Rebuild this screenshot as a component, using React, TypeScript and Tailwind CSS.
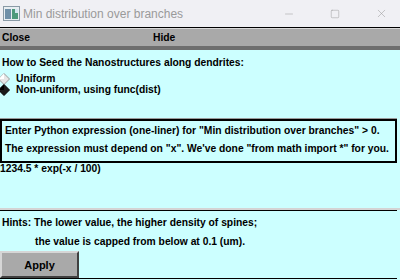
import { Minus, Square, X } from "lucide-react";

const tk = { fontFamily: '"Liberation Sans", Arial, sans-serif' };

function AppIcon() {
  return (
    <svg width="17" height="15" viewBox="0 0 17 15">
      <rect x="0.5" y="0.5" width="16" height="14" fill="#e8eef2" stroke="#8a9aa6" />
      <rect x="2" y="3" width="6" height="10" fill="#6f8fa8" />
      <rect x="9" y="3" width="6" height="10" fill="#4e9a7c" />
      <rect x="12" y="3" width="3" height="4" fill="#d4e6f0" />
    </svg>
  );
}

function Radio({ on, label }: { on?: boolean; label: string }) {
  return (
    <div className="flex items-center h-[11px]">
      <svg width="12" height="12" viewBox="0 0 12 12" className="-ml-[4px] shrink-0">
        <polygon points="6,0.5 11.5,6 6,11.5 0.5,6" fill={on ? "#1a1a1a" : "#e6e6e6"} stroke={on ? "#000" : "#9a9a9a"} />
        <polygon points="6,0.5 0.5,6 6,6" fill={on ? "#000" : "#fff"} />
      </svg>
      <span className="ml-[6px]">{label}</span>
    </div>
  );
}

export default function App() {
  return (
    <div className="w-[400px] h-[280px] overflow-hidden bg-[#ccffff] flex flex-col text-[10.3px] leading-[12px] font-bold text-black" style={tk}>
      <div className="h-[27px] bg-[#f0f0f4] flex items-center shrink-0">
        <div className="pl-[3px] pr-[3px] flex items-center"><AppIcon /></div>
        <span className="text-[12px] font-normal text-[#9a9a9a]">Min distribution over branches</span>
        <div className="ml-auto -mr-[4px] flex items-center text-[#9a9a9a]">
          <div className="w-[46px] flex justify-center"><Minus size={12} strokeWidth={1} /></div>
          <div className="w-[46px] flex justify-center"><Square size={10} strokeWidth={1.2} /></div>
          <div className="w-[46px] flex justify-center"><X size={13} strokeWidth={1} /></div>
        </div>
      </div>
      <div className="h-[1px] bg-black shrink-0" />
      <div className="h-[22px] bg-[#a9a9a9] border-t border-[#d8d8d8] border-b-[4px] border-b-[#6e6e6e] flex items-center shrink-0">
        <span className="pl-[2px] w-[153px]">Close</span>
        <span>Hide</span>
      </div>
      <div className="pt-[7px] pl-[2px]">How to Seed the Nanostructures along dendrites:</div>
      <div className="pt-[4px] pl-[2px] flex flex-col">
        <Radio label="Uniform" />
        <Radio on label="Non-uniform, using func(dist)" />
      </div>
      <div className="mt-[23px] mr-[3px] border-t border-t-[#9a9a9a] shrink-0">
        <div className="h-[44px] border-2 border-black flex flex-col gap-[6px] pt-[4px] pl-[3px]">
          <div>Enter Python expression (one-liner) for "Min distribution over branches" &gt; 0.</div>
          <div>The expression must depend on "x". We've done "from math import *" for you.</div>
        </div>
      </div>
      <div className="h-[11px] leading-[11px]">1234.5 * exp(-x / 100)</div>
      <div className="mt-[34px] border-t-[2px] border-[#d4d4d4] shrink-0" />
      <div className="h-[69px] border-t border-b border-black flex flex-col mr-[3px] shrink-0">
        <div className="pt-[6px] pl-[2px]">Hints: The lower value, the higher density of spines;</div>
        <div className="pt-[7px] pl-[35px]">the value is capped from below at 0.1 (um).</div>
        <div className="mt-auto">
          <button className="w-[79px] h-[27px] bg-[#a9a9a9] border-2 border-t-[#d6d6d6] border-l-[#d6d6d6] border-r-[#404040] border-b-[#404040] text-[11px] font-bold flex items-center justify-center">
            Apply
          </button>
        </div>
      </div>
    </div>
  );
}
